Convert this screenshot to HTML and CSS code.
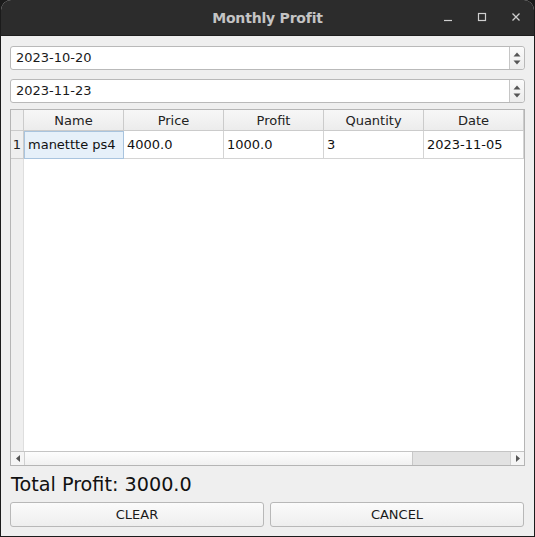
FILE: index.html
```html
<!DOCTYPE html>
<html>
<head>
<meta charset="utf-8">
<link rel="stylesheet" href="styles.css">
</head>
<body>
<div class="window">
  <div class="titlebar">
    <span class="title">Monthly Profit</span>
    <div class="controls">
      <svg width="10" height="10" viewBox="0 0 10 10"><path d="M1 8.5H9" stroke="#cfcfcf" stroke-width="1.2"/></svg>
      <svg width="10" height="10" viewBox="0 0 10 10"><rect x="1.5" y="1.5" width="7" height="7" fill="none" stroke="#cfcfcf" stroke-width="1.2"/></svg>
      <svg width="10" height="10" viewBox="0 0 10 10"><path d="M1.5 1.5L8.5 8.5M8.5 1.5L1.5 8.5" stroke="#cfcfcf" stroke-width="1.3"/></svg>
    </div>
  </div>
  <div class="content">
    <div class="dateedit">
      <span class="val">2023-10-20</span>
      <div class="spin">
        <svg width="8" height="5" viewBox="0 0 8 5"><path d="M0.5 4.5L4 0.5L7.5 4.5Z" fill="#555"/></svg>
        <svg width="8" height="5" viewBox="0 0 8 5"><path d="M0.5 0.5L4 4.5L7.5 0.5Z" fill="#555"/></svg>
      </div>
    </div>
    <div class="dateedit">
      <span class="val">2023-11-23</span>
      <div class="spin">
        <svg width="8" height="5" viewBox="0 0 8 5"><path d="M0.5 4.5L4 0.5L7.5 4.5Z" fill="#555"/></svg>
        <svg width="8" height="5" viewBox="0 0 8 5"><path d="M0.5 0.5L4 4.5L7.5 0.5Z" fill="#555"/></svg>
      </div>
    </div>
    <div class="table">
      <div class="viewport">
        <div class="hrow">
          <div class="corner"></div>
          <div class="hcell">Name</div>
          <div class="hcell">Price</div>
          <div class="hcell">Profit</div>
          <div class="hcell">Quantity</div>
          <div class="hcell">Date</div>
        </div>
        <div class="drow">
          <div class="rowhead">1</div>
          <div class="cell selected">manettte ps4</div>
          <div class="cell">4000.0</div>
          <div class="cell">1000.0</div>
          <div class="cell">3</div>
          <div class="cell">2023-11-05</div>
        </div>
        <div class="empty">
          <div class="rowhead-fill"></div>
        </div>
      </div>
      <div class="hscroll">
        <div class="sbtn">
          <svg width="4" height="7" viewBox="0 0 4 7"><path d="M4 0L0 3.5L4 7Z" fill="#555"/></svg>
        </div>
        <div class="track">
          <div class="handle"></div>
        </div>
        <div class="sbtn right">
          <svg width="4" height="7" viewBox="0 0 4 7"><path d="M0 0L4 3.5L0 7Z" fill="#555"/></svg>
        </div>
      </div>
    </div>
    <div class="total">Total Profit: 3000.0</div>
    <div class="buttons">
      <button class="btn">CLEAR</button>
      <button class="btn">CANCEL</button>
    </div>
  </div>
</div>
</body>
</html>
```

FILE: styles.css
```css
html, body {
  margin: 0;
  padding: 0;
  background: #1b1b1b;
}
body {
  width: 535px;
  height: 537px;
  overflow: hidden;
  font-family: "DejaVu Sans", sans-serif;
  font-size: 13px;
  color: #1a1a1a;
}
.window {
  width: 533px;
  height: 536px;
  margin-left: 1px;
  background: #efefef;
  border-radius: 10px 10px 0 0;
  overflow: hidden;
  display: flex;
  flex-direction: column;
}
.titlebar {
  height: 35px;
  background: #2c2c2c;
  border-bottom: 1px solid #1e1e1e;
  position: relative;
  display: flex;
  align-items: center;
  justify-content: center;
  flex-shrink: 0;
}
.title {
  color: #c4c4c4;
  font-weight: bold;
  font-size: 14px;
  letter-spacing: -0.2px;
}
.controls {
  position: absolute;
  right: 13px;
  top: 12px;
  display: flex;
  gap: 24px;
}
.controls svg { display: block; }
.content {
  flex: 1;
  display: flex;
  flex-direction: column;
  padding: 10px 9px 0 9px;
}
.dateedit {
  height: 22px;
  background: #fff;
  border: 1px solid #b9b9b9;
  border-radius: 3px;
  display: flex;
  align-items: center;
  margin-bottom: 9px;
}
.dateedit + .dateedit { margin-bottom: 6px; }
.val {
  flex: 1;
  padding-left: 5px;
  line-height: 22px;
}
.spin {
  width: 14px;
  height: 22px;
  border-left: 1px solid #c6c6c6;
  display: flex;
  flex-direction: column;
  align-items: center;
  justify-content: center;
  gap: 3px;
  background: linear-gradient(#fbfbfb, #ececec);
  border-radius: 0 3px 3px 0;
}
.spin svg { display: block; }
.table {
  height: 355px;
  border: 1px solid #b5b5b5;
  background: #fff;
  display: flex;
  flex-direction: column;
}
.viewport {
  flex: 1;
  display: flex;
  flex-direction: column;
  overflow: hidden;
}
.hrow {
  display: flex;
  height: 21px;
  flex-shrink: 0;
}
.corner {
  width: 12px;
  background: #efefef;
  border-right: 1px solid #cbcbcb;
  border-bottom: 1px solid #cbcbcb;
}
.hcell {
  width: 99px;
  flex-shrink: 0;
  background: linear-gradient(#f7f7f7, #ececec);
  border-right: 1px solid #cbcbcb;
  border-bottom: 1px solid #cbcbcb;
  text-align: center;
  line-height: 21px;
  color: #222;
}
.drow {
  display: flex;
  height: 28px;
  flex-shrink: 0;
}
.rowhead {
  width: 12px;
  background: #efefef;
  border-right: 1px solid #cbcbcb;
  border-bottom: 1px solid #cbcbcb;
  text-align: center;
  line-height: 28px;
  color: #222;
}
.cell {
  width: 96px;
  flex-shrink: 0;
  padding-left: 3px;
  border-right: 1px solid #d4d4d4;
  border-bottom: 1px solid #d4d4d4;
  line-height: 28px;
  white-space: nowrap;
  overflow: hidden;
  color: #111;
}
.cell.selected {
  background: #e6f0f9;
  border: 1px solid #a9c4de;
  width: 95px;
  height: 26px;
  line-height: 26px;
}
.empty {
  flex: 1;
  display: flex;
}
.rowhead-fill {
  width: 12px;
  background: #efefef;
  border-right: 1px solid #dedede;
}
.hscroll {
  height: 13px;
  border-top: 1px solid #c4c4c4;
  display: flex;
  background: #e3e3e3;
  flex-shrink: 0;
}
.sbtn {
  width: 13px;
  display: flex;
  align-items: center;
  justify-content: center;
  background: #f5f5f5;
  border-right: 1px solid #d0d0d0;
}
.sbtn.right {
  border-right: none;
  border-left: 1px solid #d0d0d0;
}
.sbtn svg { display: block; }
.track {
  flex: 1;
  display: flex;
  background: #e2e2e2;
}
.handle {
  width: 387px;
  background: linear-gradient(#fdfdfd, #f1f1f1);
  border-right: 1px solid #c8c8c8;
}
.total {
  font-size: 19.2px;
  line-height: 22px;
  margin-top: 8px;
  margin-left: 1px;
  color: #111;
}
.buttons {
  display: flex;
  gap: 6px;
  margin-top: 6px;
  padding-right: 1px;
}
.btn {
  flex: 1;
  height: 25px;
  font-family: "DejaVu Sans", sans-serif;
  font-size: 13px;
  color: #1a1a1a;
  background: linear-gradient(#fbfbfb, #eeeeee);
  border: 1px solid #b8b8b8;
  border-radius: 3px;
  padding: 0;
  margin: 0;
}
```
